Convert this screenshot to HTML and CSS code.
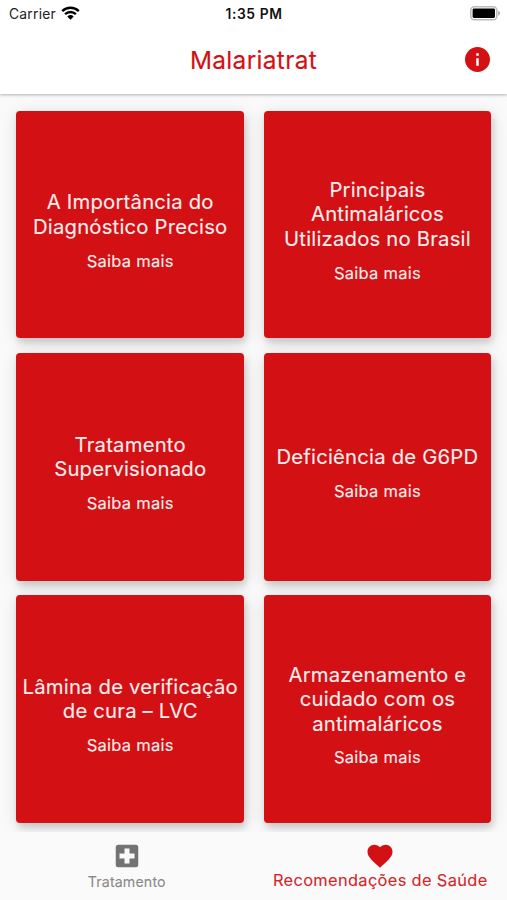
FILE: index.html
```html
<!DOCTYPE html>
<html lang="pt-BR">
<head>
<meta charset="utf-8">
<meta name="viewport" content="width=device-width, initial-scale=1">
<title>Malariatrat</title>
<link rel="stylesheet" href="styles.css">
</head>
<body>
<div class="app">
  <header class="header">
    <div class="status">
      <div class="carrier"><span>Carrier</span>
        <svg class="wifi" viewBox="0 0 19 14"><path d="M1.2 5.1a12 12 0 0 1 16.6 0M4.1 8.2a7.8 7.8 0 0 1 10.8 0" fill="none" stroke="#000" stroke-width="2.4"/><path d="M9.5 13.8l3.2-3.3a4.7 4.7 0 0 0-6.4 0z"/></svg>
      </div>
      <time class="time">1:35 PM</time>
      <svg class="battery" viewBox="0 0 31 15"><rect x=".8" y=".8" width="26" height="13" rx="3.6" fill="#fff" stroke="#bbb" stroke-width="1.6"/><rect x="2.6" y="2.6" width="22.4" height="9.4" rx="1.4"/><path d="M28.1 4.8c2.5 1.2 2.5 3.7 0 4.9z" fill="#aaa"/></svg>
    </div>
    <div class="bar">
      <h1 class="title">Malariatrat</h1>
      <svg class="info" viewBox="2 2 20 20"><path d="M12 2a10 10 0 1 0 0 20 10 10 0 0 0 0-20zm1 15h-2v-6h2zm0-8h-2V7h2z"/></svg>
    </div>
  </header>
  <main class="grid">
    <article class="card"><h2>A Importância do<br>Diagnóstico Preciso</h2><p>Saiba mais</p></article>
    <article class="card"><h2>Principais<br>Antimaláricos<br>Utilizados no Brasil</h2><p>Saiba mais</p></article>
    <article class="card"><h2>Tratamento<br>Supervisionado</h2><p>Saiba mais</p></article>
    <article class="card"><h2>Deficiência de G6PD</h2><p>Saiba mais</p></article>
    <article class="card"><h2>Lâmina de verificação<br>de cura – LVC</h2><p>Saiba mais</p></article>
    <article class="card"><h2>Armazenamento e<br>cuidado com os<br>antimaláricos</h2><p>Saiba mais</p></article>
  </main>
  <nav class="tabs">
    <a class="tab">
      <svg viewBox="0 0 24 24"><path d="M19 3H5a2 2 0 0 0-2 2v14a2 2 0 0 0 2 2h14a2 2 0 0 0 2-2V5a2 2 0 0 0-2-2zm-1 11h-4v4h-4v-4H6v-4h4V6h4v4h4z"/></svg>
      <span>Tratamento</span>
    </a>
    <a class="tab active">
      <svg viewBox="0 0 24 24"><path d="M12 21.35l-1.45-1.32C5.4 15.36 2 12.28 2 8.5 2 5.42 4.42 3 7.5 3c1.74 0 3.41.81 4.5 2.09C13.09 3.81 14.76 3 16.5 3 19.58 3 22 5.42 22 8.5c0 3.78-3.4 6.86-8.55 11.54z"/></svg>
      <span>Recomendações de Saúde</span>
    </a>
  </nav>
</div>
</body>
</html>
```
FILE: styles.css
```css
* { box-sizing: border-box; }
body, h1, h2, p { margin: 0; font-weight: 400; }
body { font-family: Inter, "Liberation Sans", sans-serif; background: #fafafa; }
svg { display: block; }
.app { width: 507px; height: 900px; display: flex; flex-direction: column; overflow: hidden; }
.header { height: 94px; flex: none; background: #fff; box-shadow: 0 1px 3px rgba(0,0,0,.3); position: relative; z-index: 1; }
.status { height: 27px; padding: 0 6px 0 9px; display: grid; grid-template-columns: 1fr auto 1fr; align-items: center; font-size: 13.8px; color: #222; }
.carrier { display: flex; align-items: center; gap: 5px; letter-spacing: .25px; }
.wifi { width: 19px; height: 14px; margin-top: -2px; }
.time { font-weight: 600; font-size: 13.8px; letter-spacing: .6px; color: #111; transform: translateX(-1px); }
.battery { width: 31px; height: 15px; justify-self: end; }
.bar { height: 65px; padding: 0 17px; display: grid; grid-template-columns: 25px 1fr 25px; align-items: center; color: #d31014; }
.title { grid-column: 2; text-align: center; font-size: 24.4px; letter-spacing: .35px; -webkit-text-stroke: .15px currentColor; }
.info { width: 25px; height: 25px; fill: #d31014; }
.grid { height: 738px; padding: 16.7px 16.2px 8.5px 16.4px; display: grid; grid-template-columns: 227.7px 227.7px; grid-auto-rows: 227.7px; gap: 14.7px 19.5px; overflow: hidden; background: #fafafa; }
.card { background: #d31014; color: #ffeded; border-radius: 4px; box-shadow: 2px 5px 6px rgba(0,0,0,.13), 1px 3px 18px rgba(0,0,0,.13); display: flex; flex-direction: column; align-items: center; justify-content: center; gap: 12.5px; padding-top: 12.4px; text-align: center; white-space: nowrap; }
.card h2 { font-size: 20.3px; line-height: 24.4px; letter-spacing: .2px; -webkit-text-stroke: .1px currentColor; }
.card p { font-size: 16.5px; line-height: 19.7px; letter-spacing: .25px; -webkit-text-stroke: .1px currentColor; }
.tabs { height: 68px; flex: none; display: grid; grid-template-columns: 1fr 1fr; background: #fafafa; }
.tab { display: flex; flex-direction: column; align-items: center; padding-top: 9px; color: #8a8a8a; fill: #737373; font-size: 14.2px; letter-spacing: .15px; line-height: 20px; white-space: nowrap; -webkit-text-stroke: .1px currentColor; }
.tab svg { width: 30px; height: 30px; stroke: none; }
.tab span { margin-top: 1px; }
.active { color: #d3262a; fill: #d31014; font-size: 16.4px; letter-spacing: .34px; }
.active span { margin-top: -1px; }
```
